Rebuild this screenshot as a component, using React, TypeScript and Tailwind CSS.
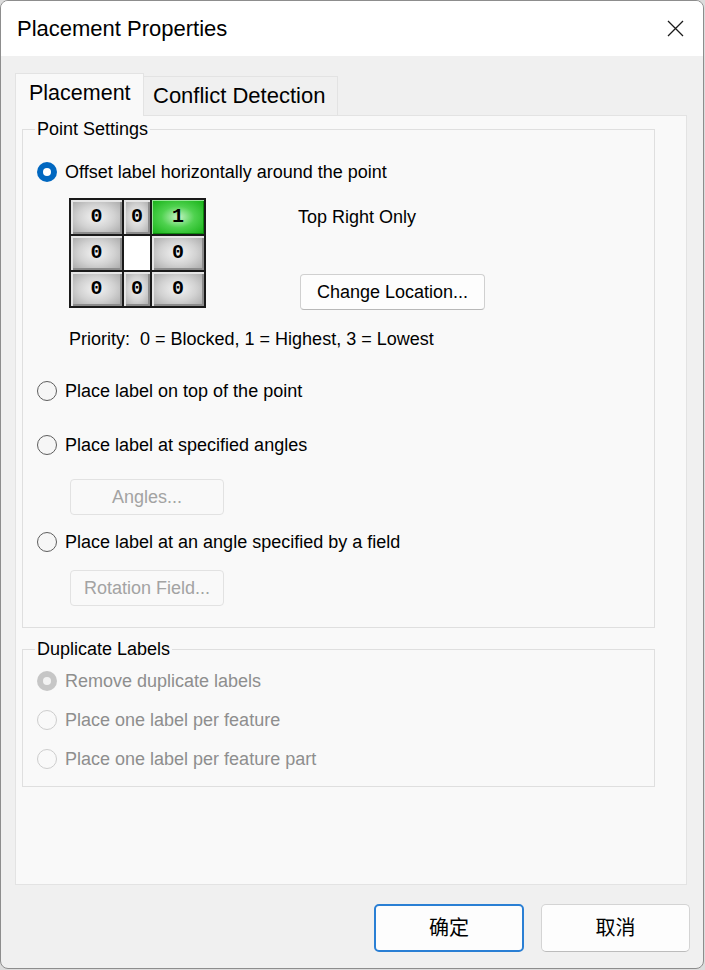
import React from 'react';

const font = { fontFamily: '"Liberation Sans", Arial, "Noto Sans CJK SC", sans-serif' };

const Radio = ({ checked, disabled }: { checked?: boolean; disabled?: boolean }) => {
  if (checked && !disabled) {
    return (
      <span className="w-[20px] h-[20px] rounded-full bg-[#0067c0] flex items-center justify-center shrink-0">
        <span className="w-[8px] h-[8px] rounded-full bg-white" />
      </span>
    );
  }
  if (checked && disabled) {
    return (
      <span className="w-[20px] h-[20px] rounded-full bg-[#c6c6c6] flex items-center justify-center shrink-0">
        <span className="w-[8px] h-[8px] rounded-full bg-[#f2f2f2]" />
      </span>
    );
  }
  return (
    <span
      className={
        disabled
          ? 'w-[20px] h-[20px] rounded-full border border-[#cdcdcd] bg-[#f9f9f9] shrink-0'
          : 'w-[20px] h-[20px] rounded-full border border-[#5e5e5e] bg-[#f6f6f6] shrink-0'
      }
    />
  );
};

const Option = ({ label, checked, disabled, className }: { label: string; checked?: boolean; disabled?: boolean; className?: string }) => (
  <div className={'flex items-center h-[24px] ' + (className || '')}>
    <Radio checked={checked} disabled={disabled} />
    <span className={'ml-[8px] text-[18px] leading-[24px] ' + (disabled ? 'text-[#8e8e8e]' : 'text-black')}>{label}</span>
  </div>
);

const Cell = ({ v, green, blank }: { v?: string; green?: boolean; blank?: boolean }) => {
  if (blank) return <div className="bg-white" />;
  return (
    <div
      className={
        green
          ? 'flex items-center justify-center bg-[radial-gradient(ellipse_at_center,#c8f5c8_0%,#4fd24f_45%,#14b014_100%)] shadow-[inset_1px_1px_0_#9be89b,inset_-1px_-1px_0_#0c8a0c]'
          : 'flex items-center justify-center bg-[radial-gradient(ellipse_at_center,#f4f4f4_0%,#d2d2d2_50%,#a4a4a4_100%)] shadow-[inset_2px_2px_0_#e6e6e6,inset_-2px_-2px_0_#8c8c8c]'
      }
    >
      <span className="text-[20px] font-bold text-black leading-none" style={{ fontFamily: '"Liberation Mono", monospace' }}>
        {v}
      </span>
    </div>
  );
};

const WinButton = ({ label, disabled, className }: { label: string; disabled?: boolean; className?: string }) => (
  <div
    className={
      'flex items-center justify-center rounded-[4px] border text-[18px] ' +
      (disabled
        ? 'border-[#e2e2e2] bg-[#f9f9f9] text-[#a3a3a3] '
        : 'border-[#d0d0d0] border-b-[#b8b8b8] bg-[#fdfdfd] text-black ') +
      (className || '')
    }
  >
    {label}
  </div>
);

export default function App() {
  return (
    <div className="w-[705px] h-[970px] bg-[#dcdcdc]" style={font}>
      <div className="w-[704px] h-[969px] rounded-[8px] border border-[#8d8d8d] bg-[#f0f0f0] overflow-hidden flex flex-col">
        {/* title bar */}
        <div className="h-[55px] bg-white flex items-center justify-between pl-[16px] pr-[19px] shrink-0">
          <span className="text-[22px] text-black">Placement Properties</span>
          <svg width="17" height="17" viewBox="0 0 17 17">
            <path d="M1 1 L16 16 M16 1 L1 16" stroke="#1a1a1a" strokeWidth="1.3" />
          </svg>
        </div>

        <div className="pl-[14px] pr-[16px] pt-[17px]">
          {/* tabs */}
          <div className="flex items-end h-[42px] relative z-10">
            <div className="w-[129px] h-[43px] -mb-[1px] bg-[#f9f9f9] border border-b-0 border-[#e3e3e3] pl-[13px] pt-[3px] text-[21.5px] text-black">
              Placement
            </div>
            <div className="w-[194px] h-[39px] bg-[#f0f0f0] border border-b-0 border-l-0 border-[#e3e3e3] pl-[9px] pt-[2px] text-[22px] text-black">
              Conflict Detection
            </div>
          </div>

          {/* tab panel */}
          <div className="h-[770px] bg-[#f9f9f9] border border-[#e3e3e3] pl-[6px] pr-[31px] pt-[2px]">
            <fieldset className="border border-[#dfdfdf] pl-[14px] pr-[10px] pb-[21px]">
              <legend className="-ml-[2px] px-[2px] text-[18px] leading-[22px] text-black">Point Settings</legend>
              <Option label="Offset label horizontally around the point" checked className="mt-[20px]" />

              <div className="flex mt-[14px]">
                <div className="ml-[32px] w-[137px] h-[110px] bg-[#1a1a1a] p-[2px] grid grid-cols-[51px_26px_52px] grid-rows-[34px_34px_34px] gap-[2px]">
                  <Cell v="0" />
                  <Cell v="0" />
                  <Cell v="1" green />
                  <Cell v="0" />
                  <Cell blank />
                  <Cell v="0" />
                  <Cell v="0" />
                  <Cell v="0" />
                  <Cell v="0" />
                </div>
                <div className="ml-[92px] flex flex-col">
                  <span className="text-[18px] leading-[22px] mt-[8px] text-black">Top Right Only</span>
                  <WinButton label="Change Location..." className="w-[185px] h-[36px] mt-[46px] ml-[2px]" />
                </div>
              </div>

              <div className="ml-[32px] mt-[18px] text-[18px] leading-[22px] text-black whitespace-pre">
                {'Priority:  0 = Blocked, 1 = Highest, 3 = Lowest'}
              </div>

              <Option label="Place label on top of the point" className="mt-[29px]" />
              <Option label="Place label at specified angles" className="mt-[30px]" />
              <WinButton label="Angles..." disabled className="w-[154px] h-[36px] mt-[22px] ml-[33px]" />
              <Option label="Place label at an angle specified by a field" className="mt-[15px]" />
              <WinButton label="Rotation Field..." disabled className="w-[154px] h-[36px] mt-[16px] ml-[33px]" />
            </fieldset>

            <fieldset className="mt-[10px] border border-[#dfdfdf] pl-[14px] pr-[10px] pb-[15px]">
              <legend className="-ml-[2px] px-[2px] text-[18px] leading-[22px] text-black">Duplicate Labels</legend>
              <Option label="Remove duplicate labels" checked disabled className="mt-[9px]" />
              <Option label="Place one label per feature" disabled className="mt-[15px]" />
              <Option label="Place one label per feature part" disabled className="mt-[15px]" />
            </fieldset>
          </div>

          {/* bottom buttons */}
          <div className="flex justify-end gap-[17px] mt-[19px]">
            <div className="w-[150px] h-[48px] rounded-[5px] border-2 border-[#2a7fd4] bg-[#fdfdfd] flex items-center justify-center text-[20px] text-black">
              确定
            </div>
            <div className="w-[149px] h-[48px] rounded-[5px] border border-[#d4d4d4] border-b-[#bcbcbc] bg-[#fdfdfd] flex items-center justify-center text-[20px] text-black -mr-[3px]">
              取消
            </div>
          </div>
        </div>
      </div>
    </div>
  );
}
